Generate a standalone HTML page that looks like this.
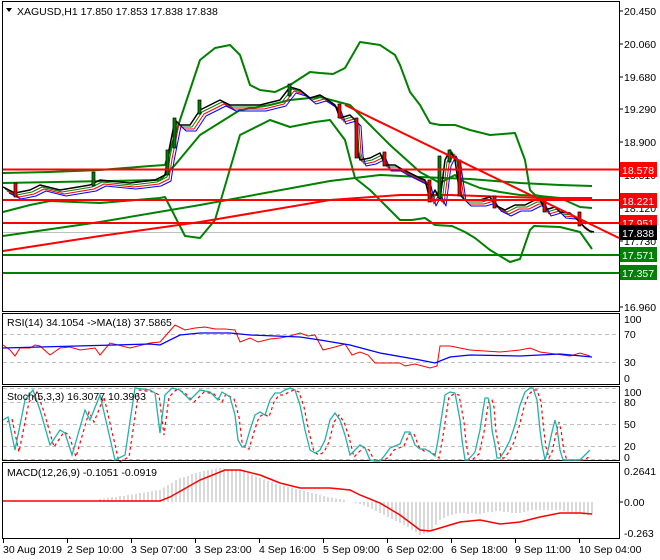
<!DOCTYPE html>
<html><head><meta charset="utf-8"><style>
html,body{margin:0;padding:0;background:#fff;width:660px;height:560px;overflow:hidden}
svg{display:block;font-family:"Liberation Sans",sans-serif;font-size:10.5px}
</style></head><body>
<svg width="660" height="560" xmlns="http://www.w3.org/2000/svg">
<rect width="660" height="560" fill="#fff"/>
<g fill="none" stroke="#000" stroke-width="1">
<rect x="2.5" y="1.5" width="617" height="310"/>
<rect x="2.5" y="313.5" width="617" height="71"/>
<rect x="2.5" y="386.5" width="617" height="74"/>
<rect x="2.5" y="462.5" width="617" height="76"/>
</g>
<g stroke="#c0c0c0" stroke-dasharray="4,3" stroke-width="1">
<line x1="3" x2="619" y1="334.5" y2="334.5"/><line x1="3" x2="619" y1="362.5" y2="362.5"/>
<line x1="3" x2="619" y1="388.5" y2="388.5"/><line x1="3" x2="619" y1="402.5" y2="402.5"/><line x1="3" x2="619" y1="424.5" y2="424.5"/><line x1="3" x2="619" y1="446.5" y2="446.5"/><line x1="3" x2="619" y1="459.5" y2="459.5"/>
</g>
<line x1="3" x2="619" y1="232.5" y2="232.5" stroke="#c0c0c0"/>
<g fill="none" stroke-linejoin="round" stroke="#008000" stroke-width="2">
<polyline points="3,173 50,172 100,170 150,166 165,165 180,120 200,60 215,48 230,45 240,55 250,85 260,90 275,92 290,85 310,72 320,73 333,74 345,68 360,42 380,45 395,55 400,65 410,92 420,105 430,123 440,125 455,125 470,130 490,135 515,133 525,160 530,190 535,195 560,200 592,198"/>
<polyline points="3,212 30,205 50,201 100,203 160,198 165,197 185,236 200,238 215,220 240,135 270,120 290,127 315,122 330,120 345,140 355,178 370,190 385,205 400,220 412,220 425,218 435,225 452,226 465,232 475,238 490,250 510,262 520,259 530,230 534,226 560,227 580,232 592,249"/>
<polyline points="3,183 160,180 175,165 200,135 240,110 270,105 290,100 320,97 350,105 370,125 390,145 420,172 440,183 455,175 460,180 480,188 500,192 520,195 540,196 560,198 580,207 592,208"/>
<polyline points="3,236 100,222 200,205 330,181 380,175 420,177 470,179 520,183 560,185 592,186"/>
<polyline stroke="#f00" points="3,251 100,236 200,222 330,200 400,195 450,195 540,198 592,198"/>
</g>
<g fill="none" stroke-width="1" stroke-linejoin="round">
<polyline stroke="#008000" transform="translate(2,2)" points="3,187 15,193 30,190 40,185 60,190 90,185 100,180 130,183 155,180 165,175 168,155 175,120 180,125 190,125 200,110 210,105 220,100 230,105 250,105 260,105 280,100 290,87 300,90 310,98 320,95 325,98 335,105 340,118 350,115 355,120 357,150 360,160 370,158 380,153 385,165 395,165 400,168 410,173 420,178 425,180 430,200 435,190 440,200 445,160 450,150 455,160 460,195 465,200 475,200 480,200 490,197 495,205 505,210 515,205 525,205 535,200 540,200 545,210 555,207 560,212 570,213 580,222 585,228 590,231"/>
<polyline stroke="#f00" transform="translate(4,4)" points="3,187 15,193 30,190 40,185 60,190 90,185 100,180 130,183 155,180 165,175 168,155 175,120 180,125 190,125 200,110 210,105 220,100 230,105 250,105 260,105 280,100 290,87 300,90 310,98 320,95 325,98 335,105 340,118 350,115 355,120 357,150 360,160 370,158 380,153 385,165 395,165 400,168 410,173 420,178 425,180 430,200 435,190 440,200 445,160 450,150 455,160 460,195 465,200 475,200 480,200 490,197 495,205 505,210 515,205 525,205 535,200 540,200 545,210 555,207 560,212 570,213 580,222 585,226"/>
<polyline stroke="#00f" transform="translate(6,6)" points="3,187 15,193 30,190 40,185 60,190 90,185 100,180 130,183 155,180 165,175 168,155 175,120 180,125 190,125 200,110 210,105 220,100 230,105 250,105 260,105 280,100 290,87 300,90 310,98 320,95 325,98 335,105 340,118 350,115 355,120 357,150 360,160 370,158 380,153 385,165 395,165 400,168 410,173 420,178 425,180 430,200 435,190 440,200 445,160 450,150 455,160 460,195 465,200 475,200 480,200 490,197 495,205 505,210 515,205 525,205 535,200 540,200 545,210 555,207 560,212 570,213 580,218"/>
</g>
<polyline fill="none" stroke="#000" stroke-width="1.5" stroke-linejoin="round" points="3,187 15,193 30,190 40,185 60,190 90,185 100,180 130,183 155,180 165,175 168,155 175,120 180,125 190,125 200,110 210,105 220,100 230,105 250,105 260,105 280,100 290,87 300,90 310,98 320,95 325,98 335,105 340,118 350,115 355,120 357,150 360,160 370,158 380,153 385,165 395,165 400,168 410,173 420,178 425,180 430,200 435,190 440,200 445,160 450,150 455,160 460,195 465,200 475,200 480,200 490,197 495,205 505,210 515,205 525,205 535,200 540,200 545,210 555,207 560,212 570,213 580,222 585,228 590,231 594,232"/>
<g stroke="#000" stroke-width="0.7">
<rect x="14" y="183" width="3" height="14" fill="#f00"/><rect x="92" y="172" width="3" height="14" fill="#008000"/>
<rect x="166" y="150" width="3" height="25" fill="#008000"/><rect x="173" y="118" width="3" height="30" fill="#008000"/>
<rect x="198" y="100" width="3" height="14" fill="#008000"/><rect x="288" y="84" width="3" height="12" fill="#008000"/>
<rect x="338" y="104" width="3" height="14" fill="#f00"/><rect x="355" y="118" width="3" height="40" fill="#f00"/>
<rect x="383" y="152" width="3" height="14" fill="#f00"/><rect x="428" y="180" width="3" height="22" fill="#f00"/>
<rect x="438" y="156" width="3" height="42" fill="#008000"/><rect x="448" y="150" width="3" height="12" fill="#008000"/>
<rect x="458" y="160" width="3" height="36" fill="#f00"/><rect x="493" y="196" width="3" height="12" fill="#f00"/>
<rect x="543" y="200" width="3" height="12" fill="#f00"/><rect x="578" y="212" width="3" height="14" fill="#f00"/>
</g>
<g stroke-width="2">
<line x1="3" x2="619" y1="169.5" y2="169.5" stroke="#f00"/>
<line x1="3" x2="619" y1="200" y2="200" stroke="#f00"/>
<line x1="3" x2="619" y1="223" y2="223" stroke="#f00"/>
<line x1="3" x2="619" y1="255" y2="255" stroke="#008000"/>
<line x1="3" x2="619" y1="273" y2="273" stroke="#008000"/>
<line x1="345" y1="105" x2="619" y2="238" stroke="#f00"/>
</g>
<polyline fill="none" stroke="#f00" points="3,345 10,350 15,356 20,348 30,348 35,345 40,346 50,355 60,348 70,347 80,350 95,348 100,355 110,343 130,348 150,343 160,342 168,333 175,325 185,330 195,328 205,327 215,329 225,329 235,330 240,342 250,338 258,342 270,339 280,338 290,336 300,333 308,336 315,335 323,350 335,347 345,344 352,355 360,352 368,355 375,363 385,363 400,363 405,366 415,364 430,368 437,366 440,346 450,346 470,350 500,352 520,350 530,348 540,352 555,354 570,356 580,353 590,356"/>
<polyline fill="none" stroke="#00f" stroke-width="1.3" points="3,348 150,344 160,345 180,335 200,333 230,333 250,335 300,337 320,340 350,345 380,353 420,360 435,363 450,357 470,355 520,356 560,354 592,357"/>
<g fill="none">
<polyline stroke="#f00" stroke-width="1.2" stroke-dasharray="3,3" transform="translate(4,2)" points="3,420 8,417 15,450 25,400 33,390 40,410 50,445 60,430 65,433 72,455 85,410 90,420 100,395 115,460 125,455 135,388 150,390 155,393 160,433 165,395 172,388 180,390 190,400 200,390 210,392 218,400 222,392 230,397 235,415 238,440 242,447 245,447 250,430 255,415 260,412 265,415 270,400 275,393 280,393 285,390 290,388 295,390 300,405 305,430 310,450 315,453 320,450 325,440 330,420 335,413 340,420 345,435 350,455 355,450 360,445 365,448 370,458 380,458 385,455 390,448 395,446 400,444 405,432 410,432 415,445 420,449 425,449 430,452 435,456 438,440 445,395 450,392 455,393 460,420 462,440 465,458 468,458 475,452 480,430 483,410 485,398 488,398 490,405 492,430 495,445 497,456 500,456 505,450 510,440 515,425 520,405 525,392 530,388 533,388 537,400 540,430 542,445 545,456 548,450 552,432 555,420 557,428 560,450 563,458 580,458 585,455"/>
<polyline stroke="#20b2aa" stroke-width="1.3" points="3,420 8,417 15,450 25,400 33,390 40,410 50,445 60,430 65,433 72,455 85,410 90,420 100,395 115,460 125,455 135,388 150,390 155,393 160,433 165,395 172,388 180,390 190,400 200,390 210,392 218,400 222,392 230,397 235,415 238,440 242,447 245,447 250,430 255,415 260,412 265,415 270,400 275,393 280,393 285,390 290,388 295,390 300,405 305,430 310,450 315,453 320,450 325,440 330,420 335,413 340,420 345,435 350,455 355,450 360,445 365,448 370,460 375,461 380,461 385,455 390,448 395,446 400,444 405,432 410,432 415,445 420,449 425,449 430,452 435,456 438,440 445,395 450,392 455,393 460,420 462,440 465,460 468,460 475,452 480,430 483,410 485,398 488,398 490,405 492,430 495,445 497,458 500,458 505,450 510,440 515,425 520,405 525,392 530,388 533,388 537,400 540,430 542,445 545,460 548,450 552,432 555,420 557,428 560,450 563,460 570,460 580,460 585,455 590,450"/>
</g>
<path fill="none" stroke="#c0c0c0" stroke-width="1.2" d="M100 502V499M104 502V498.5M108 502V498M112 502V497M116 502V497M120 502V496M124 502V496M128 502V495M132 502V494.5M136 502V494M140 502V493M144 502V492.5M148 502V492M152 502V491M156 502V490.5M160 502V490M164 502V487.5M168 502V485M172 502V483M176 502V480M180 502V478M184 502V477M188 502V476M192 502V474M196 502V473M200 502V472M204 502V471M208 502V470M212 502V469.5M216 502V468.5M220 502V468M224 502V468.5M228 502V469M232 502V469M236 502V469.5M240 502V470M244 502V471.5M248 502V473M252 502V475M256 502V476.5M260 502V478M264 502V479.5M268 502V481M272 502V482M276 502V484M280 502V485M284 502V486M288 502V487M292 502V488M296 502V489M300 502V490M304 502V491M308 502V492M312 502V493M316 502V494M320 502V495M324 502V496M328 502V497M332 502V497.5M336 502V498.5M340 502V499M344 502V500M356 502V503M360 502V504M364 502V505.5M368 502V507M372 502V509M376 502V511M380 502V513M384 502V515M388 502V517M392 502V519M396 502V521M400 502V523M404 502V525M408 502V527M412 502V530M416 502V532M420 502V535M424 502V534M428 502V533M432 502V530M436 502V525M440 502V520M444 502V518M448 502V516M452 502V515M456 502V514M460 502V513M464 502V513M468 502V514M472 502V513M476 502V514M480 502V514M484 502V513M488 502V512M492 502V512M496 502V511M500 502V511M504 502V512M508 502V512M512 502V513M516 502V513M520 502V513M524 502V512M528 502V511M532 502V510M536 502V510M540 502V510M544 502V510M548 502V510M552 502V510M556 502V510M560 502V510M564 502V511M568 502V512M572 502V513M576 502V514M580 502V514M584 502V515M588 502V515M592 502V515"/>
<polyline fill="none" stroke="#f00" stroke-width="1.5" points="3,501 160,501 170,497 200,480 225,470 240,470 260,475 280,483 300,488 330,488 350,490 360,495 380,503 400,515 420,530 430,531 440,528 460,522 480,520 490,522 500,524 520,522 540,517 560,513 580,513 592,514"/>
<g fill="#000">
<text x="624" y="15">20.450</text><text x="624" y="48">20.060</text><text x="624" y="81">19.680</text>
<text x="624" y="113">19.290</text><text x="624" y="146">18.900</text><text x="624" y="179">18.510</text>
<text x="624" y="212">18.120</text><text x="624" y="245">17.730</text><text x="624" y="311">16.960</text>
<text x="624" y="323">100</text><text x="624" y="338">70</text><text x="624" y="366">30</text><text x="624" y="382">0</text>
<text x="624" y="396">100</text><text x="624" y="406">80</text><text x="624" y="428">50</text><text x="624" y="450">20</text><text x="624" y="461">0</text>
<text x="624" y="475">0.2641</text><text x="624" y="506">0.00</text><text x="624" y="537">-0.263</text>
</g>
<g stroke="#000"><line x1="619" x2="623" y1="11" y2="11"/><line x1="619" x2="623" y1="44" y2="44"/><line x1="619" x2="623" y1="77" y2="77"/><line x1="619" x2="623" y1="109" y2="109"/><line x1="619" x2="623" y1="142" y2="142"/><line x1="619" x2="623" y1="175" y2="175"/><line x1="619" x2="623" y1="208" y2="208"/><line x1="619" x2="623" y1="241" y2="241"/><line x1="619" x2="623" y1="307" y2="307"/><line x1="619" x2="623" y1="502" y2="502"/></g>
<g>
<rect x="620" y="162" width="37" height="15" fill="#f00"/><text x="622" y="174" fill="#fff">18.578</text>
<rect x="620" y="193" width="37" height="15" fill="#f00"/><text x="622" y="205" fill="#fff">18.221</text>
<rect x="620" y="215" width="37" height="15" fill="#f00"/><text x="622" y="227" fill="#fff">17.951</text>
<rect x="620" y="225" width="37" height="15" fill="#000"/><text x="622" y="237" fill="#fff">17.838</text>
<rect x="620" y="247" width="37" height="15" fill="#008000"/><text x="622" y="259" fill="#fff">17.571</text>
<rect x="620" y="265" width="37" height="15" fill="#008000"/><text x="622" y="277" fill="#fff">17.357</text>
</g>
<path d="M6 8 L12 8 L9 12 Z" fill="#000"/>
<text x="17" y="15">XAGUSD,H1  17.850 17.853 17.838 17.838</text>
<text x="7" y="326">RSI(14) 34.1054  -&gt;MA(18) 37.5865</text>
<text x="7" y="400">Stoch(5,3,3) 16.3077 10.3963</text>
<text x="7" y="476">MACD(12,26,9) -0.1051 -0.0919</text>
<g fill="#000">
<text x="3" y="553">30 Aug 2019</text><text x="67" y="553">2 Sep 10:00</text><text x="131" y="553">3 Sep 07:00</text>
<text x="195" y="553">3 Sep 23:00</text><text x="259" y="553">4 Sep 16:00</text><text x="323" y="553">5 Sep 09:00</text>
<text x="387" y="553">6 Sep 02:00</text><text x="451" y="553">6 Sep 18:00</text><text x="515" y="553">9 Sep 11:00</text>
<text x="579" y="553">10 Sep 04:00</text>
</g>
<g stroke="#000"><line x1="3.5" x2="3.5" y1="539" y2="543"/><line x1="67.5" x2="67.5" y1="539" y2="543"/><line x1="131.5" x2="131.5" y1="539" y2="543"/><line x1="195.5" x2="195.5" y1="539" y2="543"/><line x1="259.5" x2="259.5" y1="539" y2="543"/><line x1="323.5" x2="323.5" y1="539" y2="543"/><line x1="387.5" x2="387.5" y1="539" y2="543"/><line x1="451.5" x2="451.5" y1="539" y2="543"/><line x1="515.5" x2="515.5" y1="539" y2="543"/><line x1="579.5" x2="579.5" y1="539" y2="543"/></g>
</svg>
</body></html>
